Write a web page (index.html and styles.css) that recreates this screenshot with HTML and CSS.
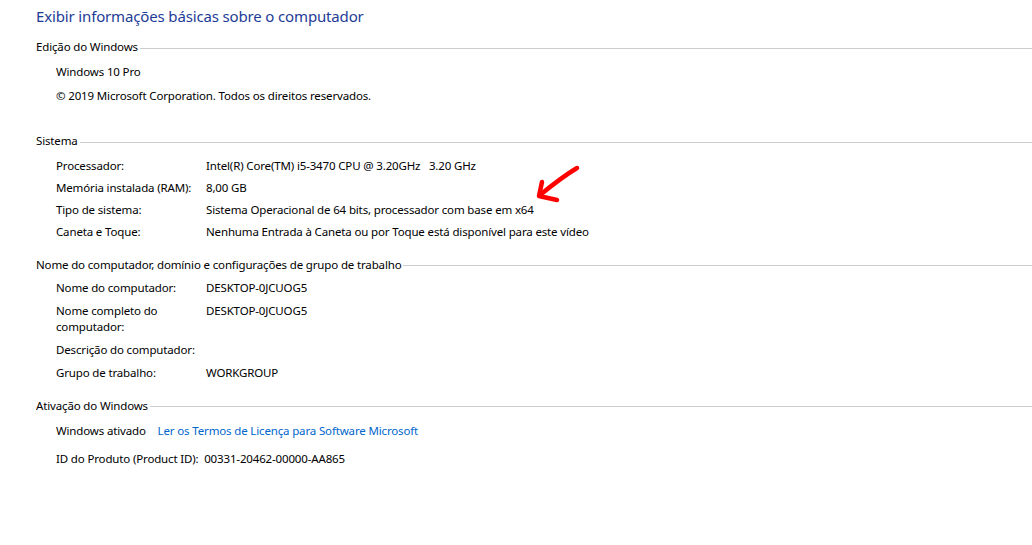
FILE: index.html
```html
<!DOCTYPE html>
<html lang="pt-BR">
  <head>
    <meta charset="UTF-8" />
    <title>Sistema</title>
    <link rel="stylesheet" href="styles.css">
  </head>
  <body>
    <div class="page">
      <h1 class="title">Exibir informações básicas sobre o computador</h1>

      <section class="group group-edition">
        <div class="group-head"><span>Edição do Windows</span></div>
        <div class="group-body">
          <div class="line">Windows 10 Pro</div>
          <div class="line">© 2019 Microsoft Corporation. Todos os direitos reservados.</div>
        </div>
      </section>

      <section class="group group-system">
        <div class="group-head"><span>Sistema</span></div>
        <div class="group-body">
          <div class="row"><div class="label">Processador:</div><div class="value">Intel(R) Core(TM) i5-3470 CPU @ 3.20GHz&nbsp;&nbsp; 3.20 GHz</div></div>
          <div class="row"><div class="label">Memória instalada (RAM):</div><div class="value">8,00 GB</div></div>
          <div class="row marked">
            <div class="label">Tipo de sistema:</div>
            <div class="value">Sistema Operacional de 64 bits, processador com base em x64</div>
            <svg class="arrow" width="50" height="40" viewBox="0 0 50 40">
              <path d="M45 4 Q30 13 8 31" />
              <path d="M10 18 L7 32 L25 36" />
            </svg>
          </div>
          <div class="row"><div class="label">Caneta e Toque:</div><div class="value">Nenhuma Entrada à Caneta ou por Toque está disponível para este vídeo</div></div>
        </div>
      </section>

      <section class="group group-name">
        <div class="group-head"><span>Nome do computador, domínio e configurações de grupo de trabalho</span></div>
        <div class="group-body">
          <div class="row"><div class="label">Nome do computador:</div><div class="value">DESKTOP-0JCUOG5</div></div>
          <div class="row"><div class="label">Nome completo do<br>computador:</div><div class="value">DESKTOP-0JCUOG5</div></div>
          <div class="row"><div class="label label-wide">Descrição do computador:</div><div class="value"></div></div>
          <div class="row"><div class="label">Grupo de trabalho:</div><div class="value">WORKGROUP</div></div>
        </div>
      </section>

      <section class="group group-activation">
        <div class="group-head"><span>Ativação do Windows</span></div>
        <div class="group-body">
          <div class="line">Windows ativado <a class="link" href="#">Ler os Termos de Licença para Software Microsoft</a></div>
          <div class="line">ID do Produto (Product ID):&nbsp; 00331-20462-00000-AA865</div>
        </div>
      </section>
    </div>
  </body>
</html>
```

FILE: styles.css
```css
body {
  margin: 0;
  background: #ffffff;
  color: #000000;
  font-family: "Noto Sans", "Open Sans", sans-serif;
  font-size: 11.5px;
  letter-spacing: -0.15px;
  height: 545px;
  overflow: hidden;
}

.page {
  padding: 6px 0 0 36px;
}

.title {
  margin: 0;
  font-size: 15px;
  font-weight: normal;
  line-height: 20px;
  letter-spacing: -0.15px;
  color: #1e3c96;
}

.group {
  display: flex;
  flex-direction: column;
}

.group-head {
  display: flex;
  align-items: center;
  line-height: 16px;
}

.group-head::after {
  content: "";
  flex: 1;
  height: 1px;
  margin-left: 2px;
  margin-top: 2px;
  background: #cccccc;
}

.group-body {
  display: flex;
  flex-direction: column;
  padding-left: 20px;
  line-height: 16px;
}

.group-edition { margin-top: 13px; }
.group-edition .group-body { gap: 8px; margin-top: 9px; }

.group-system { margin-top: 29px; }
.group-system .group-body { gap: 6px; margin-top: 8.5px; }

.group-name { margin-top: 17px; }
.group-name .group-body { gap: 7px; margin-top: 7px; }

.group-activation { margin-top: 17px; }
.group-activation .group-body { gap: 12px; margin-top: 9px; }

.row {
  display: flex;
}

.marked {
  position: relative;
}

.label {
  width: 150px;
  flex: none;
  white-space: nowrap;
}

.label-wide {
  width: auto;
}

.link {
  color: #0066cc;
  text-decoration: none;
  margin-left: 9px;
}

.arrow {
  position: absolute;
  left: 476px;
  top: -38px;
  fill: none;
  stroke: #ff0000;
  stroke-width: 4.5;
  stroke-linecap: round;
  stroke-linejoin: round;
}
```
